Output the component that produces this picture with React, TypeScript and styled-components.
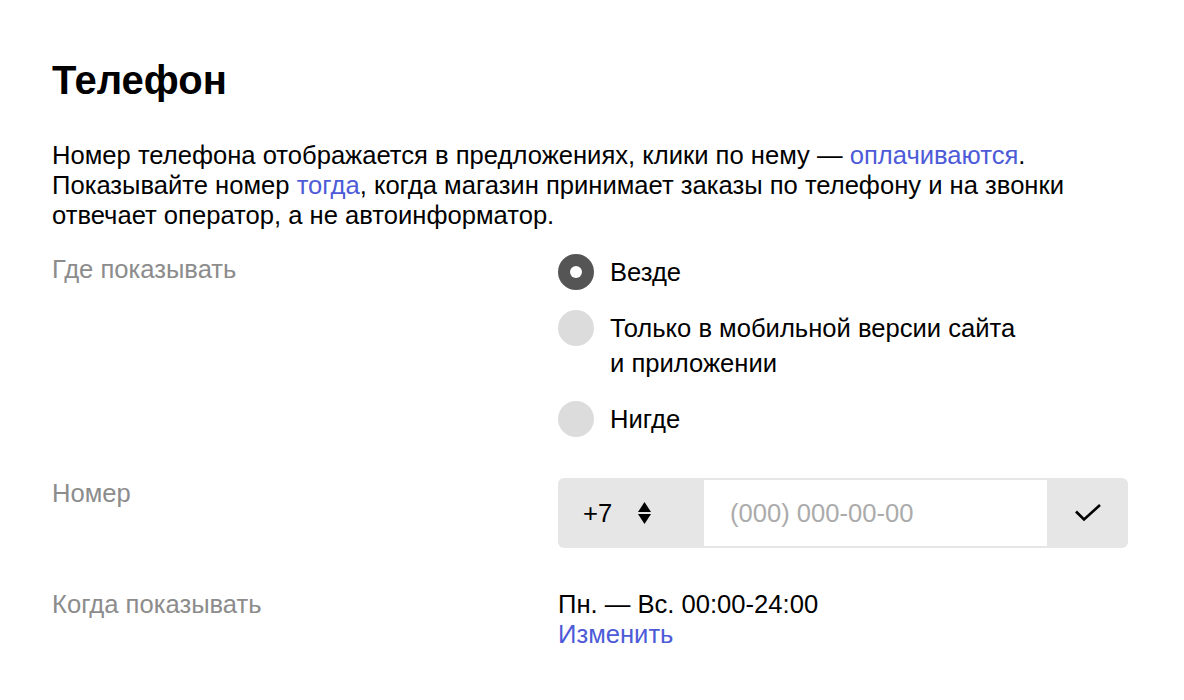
import React from "react";
import styled, { createGlobalStyle } from "styled-components";

const Global = createGlobalStyle`
  html, body { margin: 0; padding: 0; background: #fff; }
  body { font-family: "Liberation Sans", Arial, sans-serif; color: #000; }
`;

const Page = styled.div`
  padding: 52px 52px 40px 52px;
  width: 1184px;
  box-sizing: border-box;
`;

const Title = styled.h1`
  margin: 0;
  font-size: 40px;
  line-height: 56px;
  font-weight: 700;
`;

const Intro = styled.p`
  margin: 32px 0 0 0;
  font-size: 25.6px;
  line-height: 30px;
`;

const Link = styled.a`
  color: #4d5bd8;
  text-decoration: none;
  cursor: pointer;
`;

const Rows = styled.div`
  margin-top: 24px;
  display: flex;
  flex-direction: column;
  gap: 41px;
`;

const Row = styled.div`
  display: grid;
  grid-template-columns: 506px 570px;
`;

const Label = styled.div`
  font-size: 25.6px;
  line-height: 31px;
  color: #8c8c8c;
`;

const RadioList = styled.div`
  display: flex;
  flex-direction: column;
  gap: 20px;
`;

const RadioItem = styled.label`
  display: flex;
  align-items: flex-start;
  gap: 16px;
  cursor: pointer;
`;

const RadioDot = styled.span<{ $checked?: boolean }>`
  flex: none;
  width: 36px;
  height: 36px;
  border-radius: 50%;
  background: ${(p) => (p.$checked ? "#555555" : "#dcdcdc")};
  display: flex;
  align-items: center;
  justify-content: center;
  &::after {
    content: "";
    width: 12px;
    height: 12px;
    border-radius: 50%;
    background: #fff;
    display: ${(p) => (p.$checked ? "block" : "none")};
  }
`;

const RadioText = styled.span`
  font-size: 25.6px;
  line-height: 35px;
  padding-top: 1px;
`;

const Field = styled.div`
  display: flex;
  height: 70px;
  width: 570px;
  background: #e6e6e6;
  border-radius: 6px;
  padding: 2px 0;
  box-sizing: border-box;
`;

const CodeBox = styled.div`
  width: 146px;
  display: flex;
  align-items: center;
  padding-left: 25px;
  gap: 26px;
  box-sizing: border-box;
  font-size: 25.6px;
`;

const Input = styled.input`
  width: 343px;
  border: none;
  outline: none;
  background: #fff;
  padding: 0 26px;
  box-sizing: border-box;
  font-family: "Liberation Sans", Arial, sans-serif;
  font-size: 25.6px;
  color: #000;
  &::placeholder {
    color: #ababab;
  }
`;

const CheckButton = styled.button`
  flex: 1;
  border: none;
  background: transparent;
  display: flex;
  align-items: center;
  justify-content: center;
  cursor: pointer;
  padding: 0;
`;

const Schedule = styled.div`
  font-size: 25.6px;
  line-height: 30px;
`;

const Arrows = () => (
  <svg width="13" height="22" viewBox="0 0 13 22">
    <path d="M6.5 0 L13 10 L0 10 Z" fill="#000" />
    <path d="M0 12 L13 12 L6.5 22 Z" fill="#000" />
  </svg>
);

const Check = () => (
  <svg width="28" height="20" viewBox="0 0 28 20">
    <path d="M2 8.5 L10 16.5 L26 2" fill="none" stroke="#000" strokeWidth="2.6" />
  </svg>
);

export default function App() {
  return (
    <Page>
      <Global />
      <Title>Телефон</Title>
      <Intro>
        Номер телефона отображается в предложениях, клики по нему — <Link>оплачиваются</Link>.
        <br />
        Показывайте номер <Link>тогда</Link>, когда магазин принимает заказы по телефону и на звонки
        <br />
        отвечает оператор, а не автоинформатор.
      </Intro>
      <Rows>
        <Row>
          <Label>Где показывать</Label>
          <RadioList>
            <RadioItem>
              <RadioDot $checked />
              <RadioText>Везде</RadioText>
            </RadioItem>
            <RadioItem>
              <RadioDot />
              <RadioText>
                Только в мобильной версии сайта
                <br />и приложении
              </RadioText>
            </RadioItem>
            <RadioItem>
              <RadioDot />
              <RadioText>Нигде</RadioText>
            </RadioItem>
          </RadioList>
        </Row>
        <Row>
          <Label>Номер</Label>
          <Field>
            <CodeBox>
              <span>+7</span>
              <Arrows />
            </CodeBox>
            <Input placeholder="(000) 000-00-00" />
            <CheckButton>
              <Check />
            </CheckButton>
          </Field>
        </Row>
        <Row>
          <Label>Когда показывать</Label>
          <Schedule>
            Пн. — Вс. 00:00-24:00
            <br />
            <Link>Изменить</Link>
          </Schedule>
        </Row>
      </Rows>
    </Page>
  );
}
